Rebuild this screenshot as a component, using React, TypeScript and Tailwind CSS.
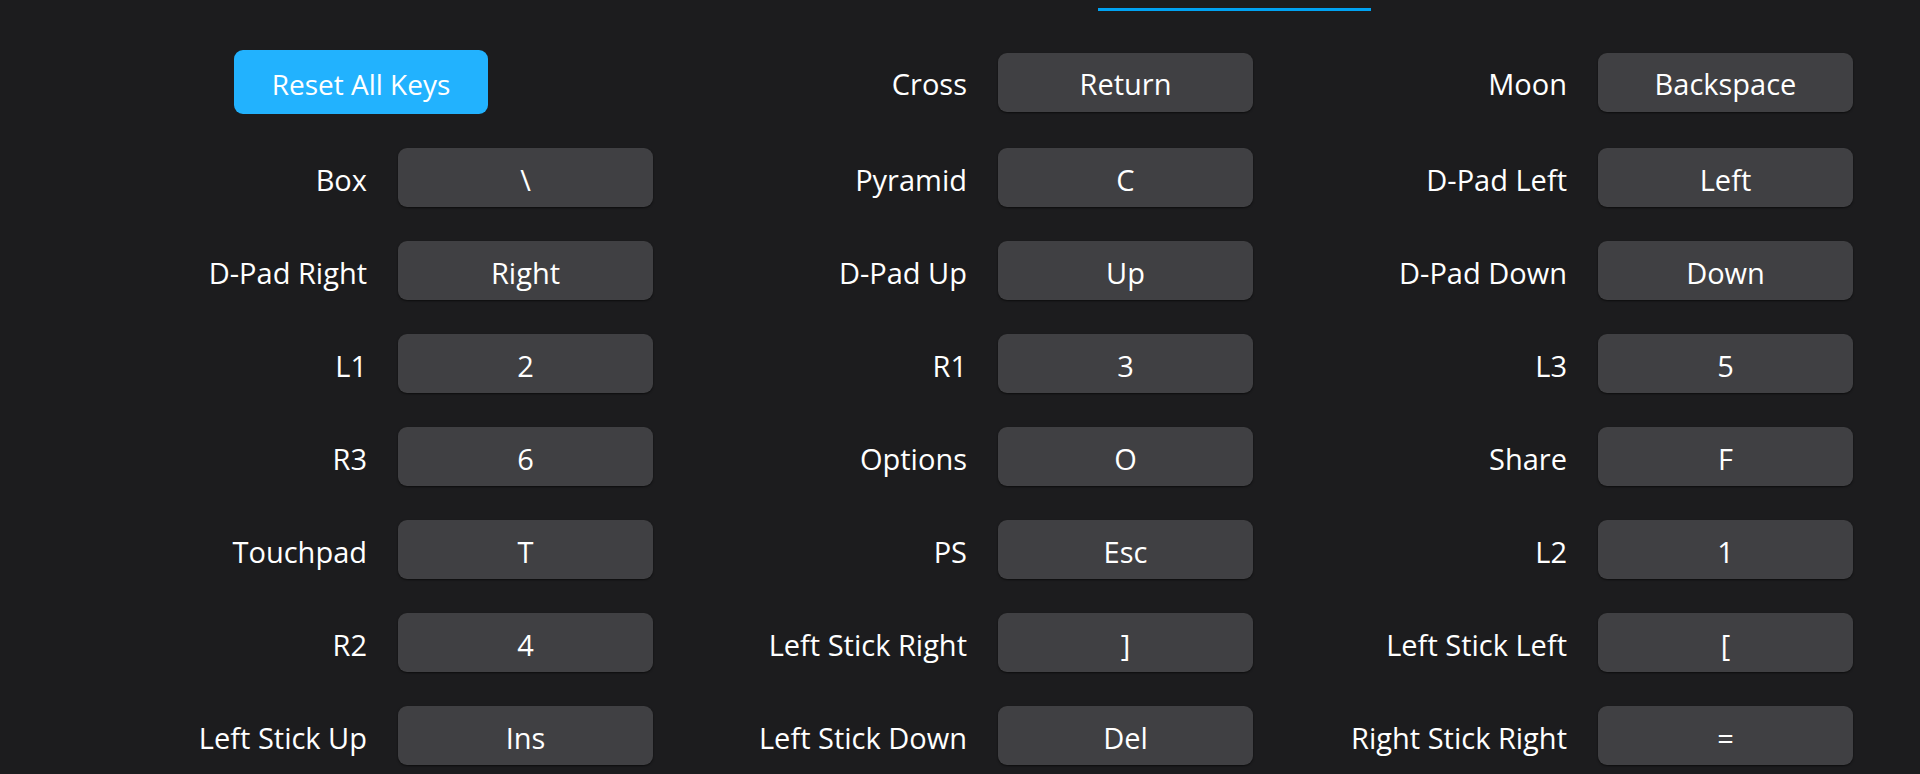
const rows: [string, string][][] = [
  [
    ["Cross", "Return"],
    ["Moon", "Backspace"],
  ],
  [
    ["Box", "\\"],
    ["Pyramid", "C"],
    ["D-Pad Left", "Left"],
  ],
  [
    ["D-Pad Right", "Right"],
    ["D-Pad Up", "Up"],
    ["D-Pad Down", "Down"],
  ],
  [
    ["L1", "2"],
    ["R1", "3"],
    ["L3", "5"],
  ],
  [
    ["R3", "6"],
    ["Options", "O"],
    ["Share", "F"],
  ],
  [
    ["Touchpad", "T"],
    ["PS", "Esc"],
    ["L2", "1"],
  ],
  [
    ["R2", "4"],
    ["Left Stick Right", "]"],
    ["Left Stick Left", "["],
  ],
  [
    ["Left Stick Up", "Ins"],
    ["Left Stick Down", "Del"],
    ["Right Stick Right", "="],
  ],
];

function KeyBinding({ label, value }: { label: string; value: string }) {
  return (
    <div className="flex items-center justify-end gap-[31px]">
      <span className="whitespace-nowrap pt-[3px] text-white">{label}</span>
      <button className="flex h-[59px] w-[255px] items-center justify-center rounded-[9px] bg-[#404043] pt-[3px] text-white shadow-[0_1px_2px_rgba(0,0,0,0.55)]">
        {value}
      </button>
    </div>
  );
}

export default function App() {
  return (
    <div
      className="h-[774px] w-full overflow-hidden bg-[#1c1c1e] text-[29px] leading-none"
      style={{ fontFamily: '"Segoe UI", "Open Sans", sans-serif' }}
    >
      {/* tab underline */}
      <div className="pl-[1098px] pt-[8px]">
        <div className="h-[3px] w-[273px] bg-[#00a2f2]" />
      </div>

      <div className="grid grid-cols-[repeat(3,600px)] gap-y-[34px] pl-[53px] pt-[39px]">
        {/* first row: reset + two bindings */}
        <div className="flex h-[64px] items-center pl-[181px]">
          <button className="flex h-[64px] w-[254px] items-center justify-center rounded-[9px] bg-[#22b2fe] pt-[3px] text-[28px] text-white">
            Reset All Keys
          </button>
        </div>
        {rows[0].map(([label, value]) => (
          <KeyBinding key={label} label={label} value={value} />
        ))}

        {rows.slice(1).map((row) =>
          row.map(([label, value]) => <KeyBinding key={label} label={label} value={value} />)
        )}
      </div>
    </div>
  );
}
